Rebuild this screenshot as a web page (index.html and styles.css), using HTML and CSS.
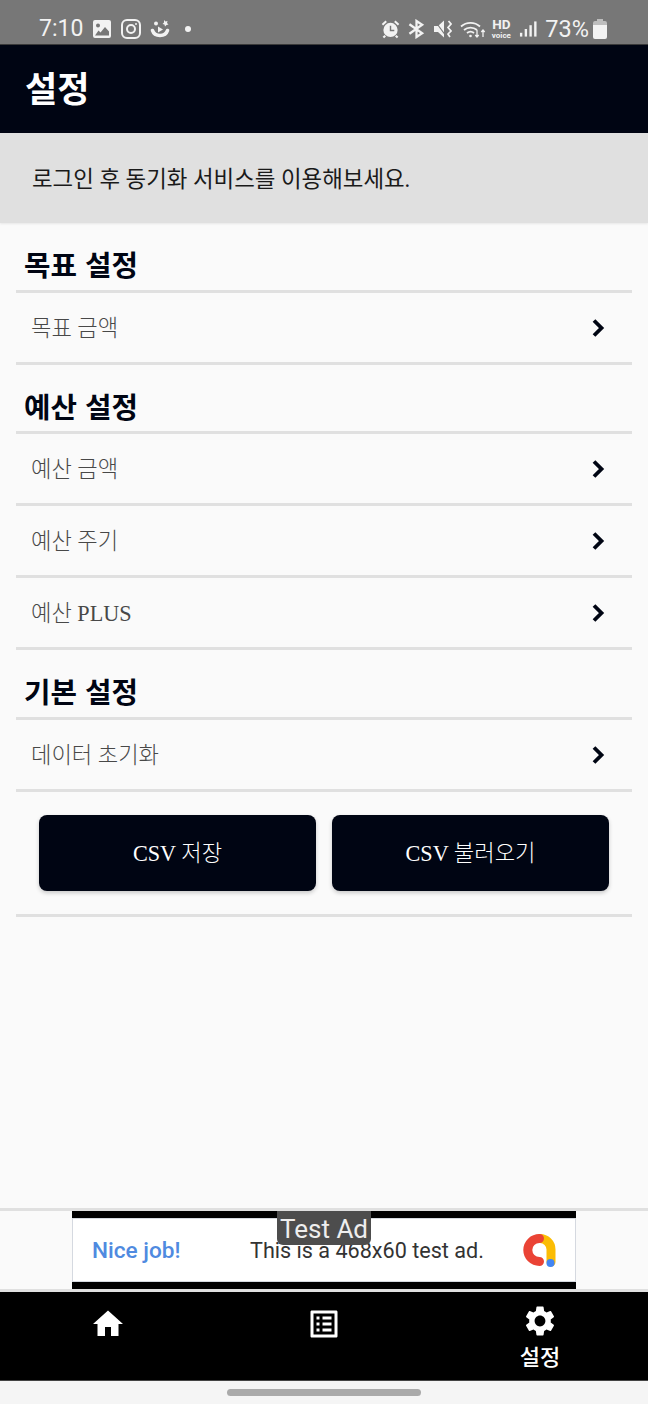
FILE: index.html
```html
<!DOCTYPE html>
<html lang="ko">
<head>
  <meta charset="UTF-8" />
  <meta name="viewport" content="width=device-width, initial-scale=1.0"/>
  <title>설정</title>
  <link rel="stylesheet" href="styles.css">
</head>
<body>
  <div class="status-bar">
    <div class="status-left">
      <span class="clock">7:10</span>
      <svg class="st-icon" width="20" height="20" viewBox="0 0 20 20"><path fill="#f2f2f2" fill-rule="evenodd" d="M3 1h14a2 2 0 0 1 2 2v14a2 2 0 0 1-2 2H3a2 2 0 0 1-2-2V3a2 2 0 0 1 2-2zM6 4.500a2 2 0 1 0 0 4a2 2 0 0 0 0-4zM3 16.500h14v-4l-4-4.500l-4.500 5.500l-2-2z"/></svg>
      <svg class="st-icon" width="20" height="20" viewBox="0 0 20 20" fill="none" stroke="#f2f2f2" stroke-width="2"><rect x="1" y="1" width="18" height="18" rx="5"/><circle cx="10" cy="10" r="4"/><circle cx="15" cy="5" r="1" fill="#f2f2f2" stroke="none"/></svg>
      <svg class="st-icon" width="20" height="20" viewBox="0 0 20 20"><path fill="none" stroke="#f2f2f2" stroke-width="3.600" stroke-linecap="round" d="M2.500 11.500a7.800 6.800 0 0 0 15 0"/><circle cx="6" cy="4.500" r="2" fill="#f2f2f2"/><path fill="#f2f2f2" d="M8 7.500l5 3l-5 3z"/><path fill="#f2f2f2" d="M14 1l1.500 1.500l2-.5l-.5 2l1.500 1.500l-2 .5l-1.500 1.500l-.5-2l-2-.5l1.500-1.500z"/></svg>
      <span class="dot"></span>
    </div>
    <div class="status-right">
      <svg class="st-icon" width="19" height="20" viewBox="0 0 20 20"><circle cx="10" cy="11" r="7.500" fill="#f2f2f2"/><path fill="none" stroke="#777" stroke-width="1.500" d="M10 6.500V11.500H14"/><path fill="none" stroke="#f2f2f2" stroke-width="2.200" d="M1.500 5.500L5.500 1.800M18.500 5.500L14.500 1.800M4.500 17l-2 2M15.500 17l2 2"/></svg>
      <svg class="st-icon" width="17" height="20" viewBox="0 0 18 20" fill="none" stroke="#f2f2f2" stroke-width="2.400"><path d="M1.500 5L15 14.500L9 18.500V1.500L15 5.500L1.500 15"/></svg>
      <svg class="st-icon mute" width="18" height="20" viewBox="0 0 18 20"><path fill="#f2f2f2" d="M0 7h4l6-5.500v17L4 13H0z"/><path fill="none" stroke="#777" stroke-width="1.200" d="M1 2l11 15"/><path fill="none" stroke="#f2f2f2" stroke-width="1.700" d="M14.500 2l2.500 3l-3 3.500l3 3.500l-3 3l2 3"/></svg>
      <svg class="st-icon" width="26" height="20" viewBox="0 0 26 20" fill="none" stroke="#f2f2f2" stroke-width="1.800"><path d="M1 7.500a14 14 0 0 1 19 0M4 11a10 10 0 0 1 13 0M7 14a5.500 5.500 0 0 1 7 0"/><circle cx="10.500" cy="17" r="1.300" fill="#f2f2f2" stroke="none"/><path stroke-width="1.300" d="M17 11v7M15.300 16l1.700 2l1.700-2M23 18v-7M21.300 13l1.700-2l1.700 2"/></svg>
      <span class="hd"><b>HD</b><i>voice</i></span>
      <svg class="st-icon" width="18" height="18" viewBox="0 0 19 18" fill="#f2f2f2"><rect x="1" y="13" width="2.500" height="4"/><rect x="6" y="9" width="2.500" height="8"/><rect x="11" y="5" width="2.500" height="12"/><rect x="16" y="1" width="2.500" height="16"/></svg>
      <span class="battery-text">73%</span>
      <svg class="st-icon bat" width="14" height="21" viewBox="0 0 14 21"><path fill="#bdbdbd" d="M4 1h6v2h2a2 2 0 0 1 2 2v3H0V5a2 2 0 0 1 2-2h2z"/><path fill="#f2f2f2" d="M0 7h14v12a2 2 0 0 1-2 2H2a2 2 0 0 1-2-2z"/></svg>
    </div>
  </div>

  <header class="app-header">
    <h1>설정</h1>
  </header>

  <div class="notice">로그인 후 동기화 서비스를 이용해보세요.</div>

  <main class="content">
    <h2 class="section-title tall">목표 설정</h2>
    <div class="row">
      <span>목표 금액</span>
      <svg class="chevron" width="14" height="20" viewBox="0 0 14 20"><path d="M2 2.500L9.500 10L2 17.500" /></svg>
    </div>

    <h2 class="section-title">예산 설정</h2>
    <div class="row">
      <span>예산 금액</span>
      <svg class="chevron" width="14" height="20" viewBox="0 0 14 20"><path d="M2 2.500L9.500 10L2 17.500" /></svg>
    </div>
    <div class="row">
      <span>예산 주기</span>
      <svg class="chevron" width="14" height="20" viewBox="0 0 14 20"><path d="M2 2.500L9.500 10L2 17.500" /></svg>
    </div>
    <div class="row">
      <span>예산 PLUS</span>
      <svg class="chevron" width="14" height="20" viewBox="0 0 14 20"><path d="M2 2.500L9.500 10L2 17.500" /></svg>
    </div>

    <h2 class="section-title tall">기본 설정</h2>
    <div class="row">
      <span>데이터 초기화</span>
      <svg class="chevron" width="14" height="20" viewBox="0 0 14 20"><path d="M2 2.500L9.500 10L2 17.500" /></svg>
    </div>

    <div class="csv-buttons">
      <button class="csv-btn">CSV 저장</button>
      <button class="csv-btn">CSV 불러오기</button>
    </div>
  </main>

  <div class="ad-wrap">
    <div class="ad">
      <span class="ad-badge">Test Ad</span>
      <div class="ad-inner">
        <span class="ad-nice">Nice job!</span>
        <span class="ad-text">This is a 468x60 test ad.</span>
        <svg class="ad-logo" width="36" height="36" viewBox="0 0 36 36" fill="none" stroke-width="9" stroke-linecap="round">
          <path stroke="#fbbc04" d="M19 6.500A11 11 0 0 1 30 17.500V30"/>
          <path stroke="#ea4335" d="M18.500 6.500A11.700 11.500 0 0 0 18.500 29.500"/>
          <circle cx="29.500" cy="31" r="4" fill="#4285f4"/>
        </svg>
      </div>
    </div>
  </div>

  <nav class="bottom-nav">
    <div class="nav-item">
      <svg class="nav-icon" width="36" height="36" viewBox="0 0 24 24" fill="#fff"><path d="M10 20v-6h4v6h5v-8h3L12 3L2 12h3v8z"/></svg>
    </div>
    <div class="nav-item">
      <svg class="nav-icon" width="36" height="36" viewBox="0 0 24 24" fill="#fff"><path d="M19 5v14H5V5h14m1.100-2H3.900c-.5 0-.9.400-.9.900v16.200c0 .4.400.9.900.9h16.200c.4 0 .9-.5.900-.9V3.900c0-.5-.5-.9-.9-.9zM11 7h6v2h-6V7zm0 4h6v2h-6v-2zm0 4h6v2h-6v-2zM7 7h2v2H7V7zm0 4h2v2H7v-2zm0 4h2v2H7v-2z"/></svg>
    </div>
    <div class="nav-item">
      <svg width="36" height="36" viewBox="0 0 24 24" fill="#fff"><path d="M19.140 12.940c.04-.3.060-.61.060-.94c0-.32-.02-.64-.07-.94l2.030-1.580a.49.49 0 0 0 .12-.61l-1.920-3.320a.488.488 0 0 0-.59-.22l-2.390.96c-.5-.38-1.030-.7-1.620-.94l-.36-2.540a.484.484 0 0 0-.48-.41h-3.840c-.24 0-.43.170-.47.410l-.36 2.540c-.59.240-1.130.57-1.620.94l-2.390-.96c-.22-.08-.47 0-.59.220L2.740 8.870c-.12.210-.08.470.12.610l2.030 1.580c-.05.300-.09.630-.09.940s.02.640.07.940l-2.030 1.580a.49.49 0 0 0-.12.610l1.920 3.320c.12.220.37.290.59.220l2.390-.96c.5.380 1.030.7 1.620.94l.36 2.540c.05.240.24.410.48.410h3.840c.24 0 .44-.17.470-.41l.36-2.540c.59-.24 1.130-.56 1.620-.94l2.390.96c.22.080.47 0 .59-.22l1.920-3.320c.12-.22.070-.47-.12-.61l-2.010-1.580zM12 15.600c-1.980 0-3.600-1.620-3.600-3.600s1.620-3.600 3.600-3.600s3.600 1.620 3.600 3.600s-1.620 3.600-3.600 3.600z"/></svg>
      <span class="nav-label">설정</span>
    </div>
  </nav>

  <div class="home-bar"><span class="home-handle"></span></div>
</body>
</html>
```

FILE: styles.css
```css
* {
  box-sizing: border-box;
}
html, body {
  height: 100%;
}
body {
  margin: 0;
  height: 1404px;
  display: flex;
  flex-direction: column;
  background-color: #fafafa;
  font-family: "Liberation Serif", "Noto Sans CJK KR", serif;
  color: #333;
  overflow: hidden;
}

/* status bar */
.status-bar {
  height: 44px;
  flex: none;
  background: #777;
  color: #f2f2f2;
  display: flex;
  justify-content: space-between;
  align-items: center;
  padding: 13px 41px 0 39px;
  font-family: Roboto, sans-serif;
}
.status-left, .status-right {
  display: flex;
  align-items: center;
}
.status-left {
  gap: 9px;
}
.status-right {
  gap: 8px;
}
.clock {
  font-size: 23px;
}
.st-icon {
  display: block;
}
.dot {
  width: 6px;
  height: 6px;
  border-radius: 50%;
  background: #f2f2f2;
  margin-left: 6px;
}
.mute {
  margin-left: 1px;
}
.hd {
  display: flex;
  flex-direction: column;
  align-items: center;
  width: 20px;
  margin-left: -3px;
}
.hd b {
  font-size: 13.500px;
  line-height: 14px;
}
.hd i {
  font-size: 8px;
  line-height: 9px;
  font-style: normal;
  font-weight: bold;
}
.battery-text {
  font-size: 23.500px;
}
.bat {
  margin-left: -4px;
}

/* header */
.app-header {
  height: 89px;
  flex: none;
  background: #000513;
  border-top: 1px solid #3a3a3a;
  display: flex;
  align-items: center;
  padding-left: 25px;
}
.app-header h1 {
  margin: 0 0 6px;
  font-family: "Noto Sans CJK KR", sans-serif;
  font-size: 35px;
  font-weight: 700;
  color: #fff;
}
.notice {
  height: 90px;
  flex: none;
  background: #e0e0e0;
  display: flex;
  align-items: center;
  padding: 0 0 3px 32px;
  font-size: 22.400px;
  color: #1a1a1a;
  box-shadow: 0 1px 2px rgba(0,0,0,0.08);
}

/* settings list */
.content {
  flex: 1;
  padding: 0 16px;
}
.section-title {
  height: 69px;
  margin: 0;
  padding: 16px 0 0 8px;
  display: flex;
  align-items: center;
  font-family: "Noto Sans CJK KR", sans-serif;
  font-size: 28.800px;
  line-height: 1;
  font-weight: 700;
  color: #000513;
  border-bottom: 3px solid #e0e0e0;
}
.section-title.tall {
  height: 70px;
}
.row {
  height: 72px;
  display: flex;
  justify-content: space-between;
  align-items: center;
  padding: 0 26px 4px 15px;
  font-size: 22.200px;
  font-weight: 300;
  color: #484848;
  border-bottom: 3px solid #e0e0e0;
}
.chevron {
  fill: none;
  stroke: #000513;
  stroke-width: 3.800;
  margin-top: 5px;
}
.csv-buttons {
  display: flex;
  gap: 16px;
  padding: 23px 23px;
  border-bottom: 3px solid #e0e0e0;
}
.csv-btn {
  flex: 1;
  height: 76px;
  padding: 0 0 5px;
  border: none;
  border-radius: 8px;
  background: #000513;
  color: #fff;
  font-family: inherit;
  font-size: 22.200px;
  font-weight: 300;
  box-shadow: 0 2px 4px rgba(0,0,0,0.2);
}

/* ad */
.ad-wrap {
  flex: none;
  height: 84px;
  border-top: 3px solid #e0e0e0;
  border-bottom: 3px solid #e0e0e0;
  display: flex;
  justify-content: center;
}
.ad {
  position: relative;
  width: 504px;
  background: #000;
  padding: 7px 0;
}
.ad-inner {
  height: 64px;
  background: #fff;
  border: 1px solid #d5d9e0;
  display: flex;
  align-items: center;
  padding: 0 18px 0 19px;
  font-family: Roboto, sans-serif;
}
.ad-nice {
  font-size: 22.600px;
  font-weight: 500;
  color: #4f8ae0;
  width: 158px;
}
.ad-text {
  flex: 1;
  font-size: 21.600px;
  color: #333;
}
.ad-badge {
  position: absolute;
  z-index: 1;
  left: 205px;
  top: 0;
  width: 94px;
  height: 34px;
  border-radius: 0 0 6px 6px;
  background: #4d4d4d;
  color: #eee;
  font-family: Roboto, sans-serif;
  font-size: 26px;
  text-align: center;
  line-height: 37px;
}

/* bottom nav */
.bottom-nav {
  flex: none;
  height: 89px;
  background: #000;
  display: grid;
  grid-template-columns: repeat(3, 1fr);
  border-bottom: 1px solid #444;
}
.nav-item {
  display: flex;
  flex-direction: column;
  align-items: center;
  padding-top: 11px;
}
.nav-icon {
  margin-top: 3px;
}
.nav-label {
  font-family: "Noto Sans CJK KR", sans-serif;
  font-size: 22px;
  font-weight: 500;
  line-height: 28px;
  margin-top: 2px;
  color: #fff;
}
.home-bar {
  flex: none;
  height: 23px;
  background: #f5f5f5;
  display: flex;
  justify-content: center;
  padding-top: 8px;
}
.home-handle {
  width: 194px;
  height: 7px;
  border-radius: 4px;
  background: #aaa;
}
```
